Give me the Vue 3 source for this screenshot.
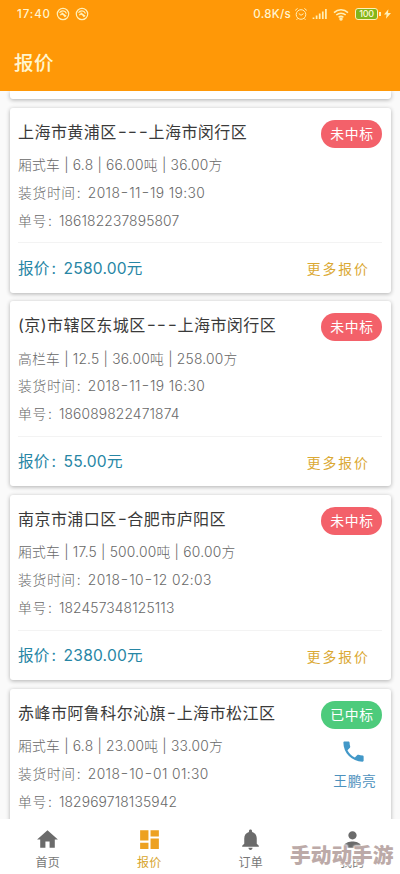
<script setup>
const orders = [
  { id: 1, route: '上海市黄浦区---上海市闵行区', spec: '厢式车 | 6.8 | 66.00吨 | 36.00方', time: '2018-11-19 19:30', no: '186182237895807', price: '2580.00元' },
  { id: 2, route: '(京)市辖区东城区---上海市闵行区', spec: '高栏车 | 12.5 | 36.00吨 | 258.00方', time: '2018-11-19 16:30', no: '186089822471874', price: '55.00元' },
  { id: 3, route: '南京市浦口区-合肥市庐阳区', spec: '厢式车 | 17.5 | 500.00吨 | 60.00方', time: '2018-10-12 02:03', no: '182457348125113', price: '2380.00元' },
  { id: 4, route: '赤峰市阿鲁科尔沁旗-上海市松江区', spec: '厢式车 | 6.8 | 23.00吨 | 33.00方', time: '2018-10-01 01:30', no: '182969718135942', price: '', contact: '王鹏亮' },
]
const tabs = [
  { label: '首页', icon: 'M10 20v-6h4v6h5v-8h3L12 3 2 12h3v8z' },
  { label: '报价', icon: 'M3 13h8V3H3v10zm0 8h8v-6H3v6zm10 0h8V11h-8v10zm0-18v6h8V3h-8z', active: true },
  { label: '订单', icon: 'M12 22c1.1 0 2-.9 2-2h-4c0 1.1.9 2 2 2zm6-6v-5c0-3.07-1.64-5.64-4.5-6.32V4c0-.83-.67-1.5-1.5-1.5s-1.5.67-1.5 1.5v.68C7.63 5.36 6 7.92 6 11v5l-2 2v1h16v-1l-2-2z' },
  { label: '我的', icon: 'M12 12c2.21 0 4-1.79 4-4s-1.79-4-4-4-4 1.79-4 4 1.79 4 4 4zm0 2c-2.67 0-8 1.34-8 4v2h16v-2c0-2.66-5.33-4-8-4z' },
]
const parts = (text) => text.match(/-|[^-]+/g)
</script>

<template>
  <div class="screen">
    <header>
      <div class="status">
        <span class="clock">17:40</span>
        <svg v-for="n in 2" :key="n" class="badge" viewBox="0 0 14 14">
          <circle cx="7" cy="7" r="5.7" />
          <path d="M3.5 5.8c1.6-2.6 5.4-2.6 7 .6M4.4 8.2c1-1.9 2.7-1.4 4.8 1.6M5.6 5.6l4.6 3.6" />
        </svg>
        <span class="speed">0.8K/s</span>
        <svg class="alarm" viewBox="0 0 14 14">
          <circle cx="7" cy="7.5" r="4.8" /><path d="M4.8 6.5 7 8.3l2.5-1.6M1.2 3.4l2.4-2M12.8 3.4l-2.4-2M3.6 11.5l-1 1.3M10.4 11.5l1 1.3" />
        </svg>
        <svg class="signal" viewBox="0 0 16 12"><path d="M1.5 11V9.5M4.6 11V7.5M7.7 11V5.5M10.8 11V3.5M13.9 11V1" /></svg>
        <svg class="wifi" viewBox="0 0 16 13"><path d="M1 4.6c4-3.7 10-3.7 14 0M3.3 7c2.7-2.4 6.7-2.4 9.4 0M5.6 9.3c1.5-1.2 3.3-1.2 4.8 0" /><circle cx="8" cy="11" r="1" /></svg>
        <span class="battery">100</span>
        <svg class="bolt" viewBox="0 0 8 11"><path d="M5 0 0 6.2h3L2.2 11 8 4.4H4.6z" /></svg>
      </div>
      <h1>报价</h1>
    </header>

    <main>
      <div class="card tail"></div>
      <article v-for="o in orders" :key="o.id" class="card">
        <div class="top">
          <div class="info">
            <h2><span v-for="(p, i) in parts(o.route)" :key="i" :class="{ dash: p === '-' }">{{ p }}</span></h2>
            <p class="spec">{{ o.spec }}</p>
            <p>装货时间<i>:</i><b><span v-for="(p, i) in parts(o.time)" :key="i" :class="{ dash: p === '-' }">{{ p }}</span></b></p>
            <p>单号<i>:</i><b class="serial">{{ o.no }}</b></p>
          </div>
          <div class="side">
            <span class="tag" :class="{ won: o.contact }">{{ o.contact ? '已中标' : '未中标' }}</span>
            <div v-if="o.contact" class="contact">
              <svg viewBox="0 0 24 24"><path d="M6.62 10.79c1.44 2.83 3.76 5.14 6.59 6.59l2.2-2.2c.27-.27.67-.36 1.02-.24 1.12.37 2.33.57 3.57.57.55 0 1 .45 1 1V20c0 .55-.45 1-1 1-9.39 0-17-7.61-17-17 0-.55.45-1 1-1h3.5c.55 0 1 .45 1 1 0 1.25.2 2.45.57 3.57.11.35.03.74-.25 1.02l-2.2 2.2z" /></svg>
              <span>{{ o.contact }}</span>
            </div>
          </div>
        </div>
        <div v-if="o.price" class="bottom">
          <span class="price">报价<i>:</i><b>{{ o.price }}</b></span>
          <a class="more">更多报价</a>
        </div>
      </article>
    </main>

    <nav>
      <div v-for="t in tabs" :key="t.label" class="tab" :class="{ active: t.active }">
        <svg viewBox="0 0 24 24"><path :d="t.icon" /></svg>
        <span>{{ t.label }}</span>
      </div>
    </nav>
    <div class="watermark">手动动手游</div>
  </div>
</template>

<style>
body { margin: 0; background: #fafafa; }
</style>

<style scoped>
* { box-sizing: border-box; }
h1, h2, p { margin: 0; font-weight: 400; }
i, b { font-style: normal; font-weight: inherit; }
.screen {
  position: relative; width: 400px; height: 874px; overflow: hidden;
  display: flex; flex-direction: column; background: #fafafa;
  font-family: Inter, "Noto Sans CJK SC", sans-serif;
}
header { height: 91px; flex: none; background: #ff9807; color: #fff5cf; }
.status { display: flex; align-items: center; height: 28px; padding: 0 9px 0 17px; font-size: 11.5px; font-weight: 500; }
.clock { width: 39px; letter-spacing: .9px; }
.status svg { fill: none; stroke: #fff0b8; stroke-width: 1.2; flex: none; }
.badge { width: 14px; height: 14px; margin-right: 5px; }
.speed { margin-left: auto; letter-spacing: .3px; }
.status .alarm { width: 14px; height: 14px; margin-left: 3px; stroke-width: 1; }
.status .signal { width: 16px; height: 12px; margin-left: 4px; stroke-width: 1.7; }
.status .wifi { width: 16px; height: 13px; margin-left: 5px; stroke-width: 1.5; }
.battery {
  position: relative; width: 23px; height: 12px; margin-left: 6px; border: 1.5px solid #fff0b8; border-radius: 3px;
  background: #83b51b; font-size: 9px; line-height: 9px; text-align: center; letter-spacing: -.3px; color: #fff9d8;
}
.battery::after { content: ""; position: absolute; right: -3.5px; top: 2.5px; width: 2px; height: 4px; background: #fff0b8; }
.status .bolt { width: 7px; height: 10px; margin-left: 6px; fill: #fff0b8; stroke: none; }
h1 { padding: 20px 0 0 14px; font-size: 19.5px; line-height: 30px; letter-spacing: .4px; font-weight: 500; }

main { height: 728px; flex: none; overflow: hidden; display: flex; flex-direction: column; gap: 8.8px; padding: 0 9px 0 10px; }
.card { flex: none; height: 184.9px; background: #fff; border-radius: 3px; box-shadow: 0 1px 4px rgba(0, 0, 0, .3); padding: 0 8.6px 0 8px; }
.tail { height: 8px; border-radius: 0 0 3px 3px; }
.top { display: flex; justify-content: space-between; height: 135.5px; border-bottom: 1px solid #f3f3f3; padding-top: 12px; }
.info { white-space: nowrap; }
h2 { font-size: 16px; line-height: 25px; letter-spacing: .45px; color: #3a3a3a; margin-bottom: 7.2px; }
.dash { display: inline-block; width: 10.6px; letter-spacing: 0; text-align: center; transform: translateY(-1px) scaleX(1.25); }
p { font-size: 13.8px; line-height: 27.8px; letter-spacing: .65px; color: #686868; font-weight: 300; }
p .dash { width: 9px; }
.spec { letter-spacing: .22px; }
p i { display: inline-block; width: 12px; padding-left: 1px; }
p b { letter-spacing: .4px; }
p b.serial { letter-spacing: .15px; }
.side { display: flex; flex-direction: column; align-items: flex-end; }
.tag { width: 61px; height: 28px; border-radius: 14px; background: #f3616a; color: #fff; font-size: 13.8px; line-height: 28px; letter-spacing: .7px; text-align: center; }
.won { background: #4dcb7c; }
.contact { width: 45px; margin: 9px 5px 0 0; display: flex; flex-direction: column; align-items: center; color: #4d91bd; font-size: 13.8px; line-height: 20px; letter-spacing: .6px; white-space: nowrap; }
.contact svg { width: 27px; height: 27px; fill: #4298c8; margin: 0 2px 6px 0; }
.bottom { display: flex; justify-content: space-between; align-items: center; height: 47px; padding-right: 12.5px; }
.price { font-size: 15.6px; color: #2786a5; letter-spacing: .2px; }
.price i { display: inline-block; width: 14px; padding-left: 2px; }
.more { font-size: 13.8px; letter-spacing: 2px; color: #dba934; padding-top: 3px; }

nav { height: 55px; flex: none; display: flex; background: #fff; }
.tab { width: 101.5px; flex: none; display: flex; flex-direction: column; align-items: center; padding: 8px 6px 0 0; color: #777; font-size: 12px; line-height: 16px; letter-spacing: .3px; }
.tab svg { width: 25px; height: 25px; fill: #6b6b6b; margin-bottom: 2.5px; }
.active { color: #d7a52d; }
.active svg { fill: #eda121; }
.watermark {
  position: absolute; left: 290px; top: 842px; font-size: 20.7px; line-height: 28px; font-weight: 900; white-space: nowrap; color: #bcaaa8;
  text-shadow: 0 0 1px #fff, 0 0 2px #fff, 0 0 2px #fff, 0 0 3px #fff;
}
</style>
